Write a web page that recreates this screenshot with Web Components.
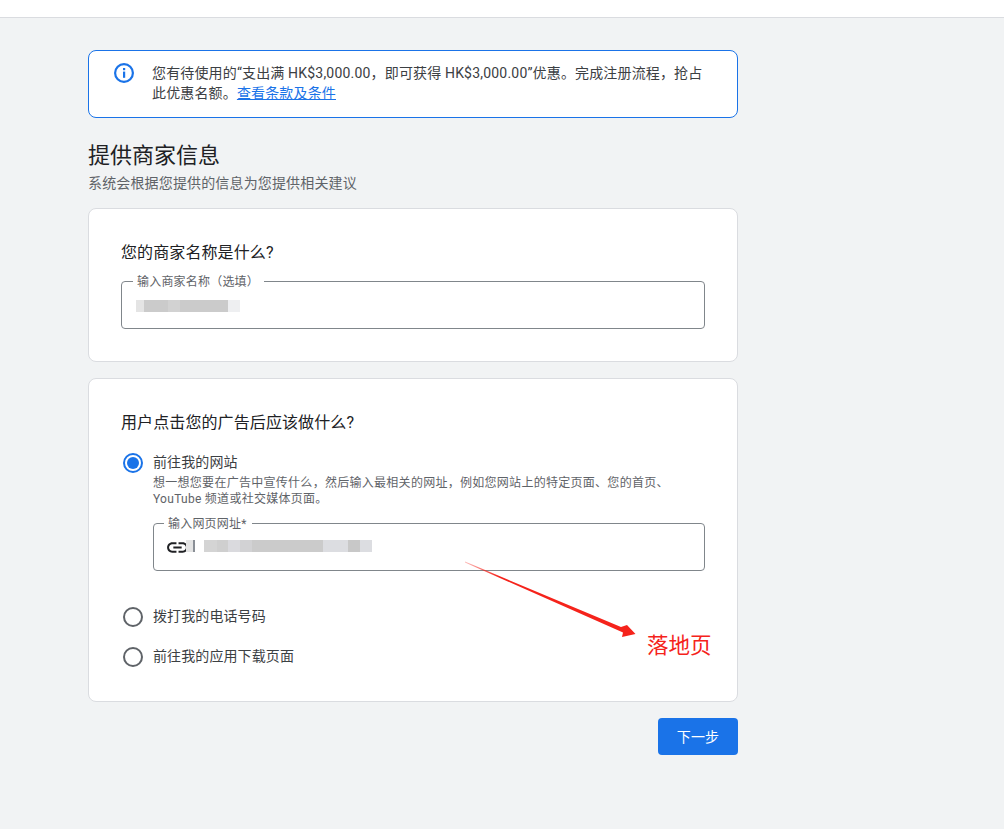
<!DOCTYPE html>
<html lang="zh-CN">
<head>
<meta charset="utf-8">
<title>提供商家信息</title>
<style>
  html, body { margin: 0; padding: 0; }
  body {
    background: #f1f3f4;
    color: #3c4043;
    font-family: Roboto, "Noto Sans CJK SC", sans-serif;
    width: 1004px;
    height: 829px;
    overflow: hidden;
    position: relative;
    text-spacing-trim: space-all;
  }
</style>
</head>
<body>
<top-bar></top-bar>
<page-main>
  <info-notice>
    <div>您有待使用的“支出满 <span style="letter-spacing:.2px">HK$3,000.00</span>，即可获得 <span style="letter-spacing:.2px">HK$3,000.00</span>”优惠。完成注册流程，抢占</div>
    <div>此优惠名额。<a href="#" style="color:#1a73e8">查看条款及条件</a></div>
  </info-notice>
  <page-title sub="系统会根据您提供的信息为您提供相关建议">提供商家信息</page-title>
  <form-card heading="您的商家名称是什么?" style="height:154px">
    <outline-field label="输入商家名称（选填）" style="--lm:-3px;--pr:5px">
      <blur-strip style="margin-top:2px" widths="8:#e4e4e4,24:#cbcbcb,12:#d2d2d2,48:#cbcbcb,12:#eeeff1"></blur-strip>
    </outline-field>
  </form-card>
  <form-card heading="用户点击您的广告后应该做什么?" style="height:324px">
    <radio-option checked label="前往我的网站" style="padding-top:1px">
      想一想您要在广告中宣传什么，然后输入最相关的网址，例如您网站上的特定页面、您的首页、<br>YouTube 频道或社交媒体页面。
      <outline-field slot="extra" label="输入网页网址*" icon style="--lm:-4px;--pr:5px">
        <blur-strip style="margin-top:-2px" widths="7:#e4e4e4,2:#8a8f96,9:#fff,13:#d4d4d4,11:#cfcfcf,12:#dadade,12:#d2d2d4,71:#cbcbcb,25:#dcdde1,12:#c8c8c8,12:#dcdde1"></blur-strip>
      </outline-field>
    </radio-option>
    <radio-option label="拨打我的电话号码" style="margin-top:35px"></radio-option>
    <radio-option label="前往我的应用下载页面" style="margin-top:18px"></radio-option>
  </form-card>
  <page-actions><blue-button>下一步</blue-button></page-actions>
</page-main>
<arrow-note>落地页</arrow-note>

<script>
function make(name, css, html, setup) {
  customElements.define(name, class extends HTMLElement {
    constructor() {
      super();
      const root = this.attachShadow({mode: 'open'});
      root.innerHTML = `<style>${css}</style>${typeof html === 'function' ? html(this) : html}`;
      if (setup) setup(this, root);
    }
  });
}

make('top-bar', `
  :host { display: block; height: 17px; background: #fff; border-bottom: 1px solid #dadce0; }
`, '');

make('page-main', `
  :host { display: block; width: 650px; padding: 32px 0 0 88px; }
`, '<slot></slot>');

make('info-notice', `
  :host { display: flex; box-sizing: border-box; height: 68px; background: #fff; border: 1px solid #1a73e8; border-radius: 8px; padding: 12px 32px 0 24px; font-size: 14px; line-height: 20px; letter-spacing: .15px; color: #3c4043; }
  svg { flex: none; width: 22px; height: 22px; margin: -1px 17px 0 0; }
  ::slotted(div) { white-space: nowrap; }
`, `
  <svg viewBox="0 0 22 22"><circle cx="11" cy="11" r="8.9" fill="none" stroke="#1a73e8" stroke-width="2.2"/><rect x="10" y="9.6" width="2.2" height="6.2" fill="#1a73e8"/><rect x="10" y="6" width="2.2" height="2.2" fill="#1a73e8"/></svg>
  <div><slot></slot></div>
`);

make('page-title', `
  :host { display: block; height: 90px; box-sizing: border-box; padding-top: 23px; }
  h1 { margin: 0; font-size: 22px; line-height: 30px; font-weight: 400; color: #202124; }
  p { margin: 3px 0 0; font-size: 14px; line-height: 18px; letter-spacing: .15px; color: #5f6368; }
`, el => `<h1><slot></slot></h1><p>${el.getAttribute('sub')}</p>`);

make('form-card', `
  :host { display: block; box-sizing: border-box; background: #fff; border: 1px solid #dadce0; border-radius: 8px; padding: 32px 32px 0; margin-bottom: 16px; }
  h2 { margin: 0 0 16px; font-size: 16px; line-height: 24px; font-weight: 400; letter-spacing: .1px; color: #202124; }
`, el => `<h2>${el.getAttribute('heading')}</h2><slot></slot>`);

make('outline-field', `
  :host { display: block; letter-spacing: 0; }
  fieldset { margin: 0; height: 48px; box-sizing: border-box; padding: 0 0 0 14px; border: 1px solid #80868b; border-radius: 4px; }
  legend { margin-left: var(--lm, -3px); padding: 0 var(--pr, 6px) 0 4px; font-size: 12px; line-height: 0; letter-spacing: .2px; color: #5f6368; height: 0; }
  .row { display: flex; align-items: center; height: 46px; }
  svg { flex: none; width: 25px; height: 25px; margin: 0 -4px 0 -3px; }
`, el => `
  <fieldset><legend>${el.getAttribute('label')}</legend>
    <div class="row">${el.hasAttribute('icon') ? '<svg viewBox="0 0 24 24"><path fill="#202124" d="M3.9 12c0-1.71 1.39-3.1 3.1-3.1h4V7H7c-2.76 0-5 2.24-5 5s2.24 5 5 5h4v-1.9H7c-1.71 0-3.1-1.39-3.1-3.1zM8 13h8v-2H8v2zm9-6h-4v1.9h4c1.71 0 3.1 1.39 3.1 3.1s-1.39 3.1-3.1 3.1h-4V17h4c2.76 0 5-2.24 5-5s-2.24-5-5-5z"/></svg>' : ''}<slot></slot></div>
  </fieldset>`);

make('blur-strip', `
  :host { display: flex; height: 12px; position: relative; }
  i { display: block; height: 12px; }
`, el => el.getAttribute('widths').split(',').map(p => {
  const [w, c] = p.split(':');
  return `<i style="width:${w}px;background:${c}"></i>`;
}).join(''));

make('radio-option', `
  :host { display: grid; grid-template-columns: 22px 1fr; column-gap: 10px; }
  .dot { width: 20px; height: 20px; margin: 1px 0 0 2px; box-sizing: border-box; border: 2px solid #5f6368; border-radius: 50%; position: relative; }
  :host([checked]) .dot { border-color: #1a73e8; }
  :host([checked]) .dot::after { content: ''; position: absolute; inset: 2px; border-radius: 50%; background: #1a73e8; }
  .label { font-size: 14px; line-height: 20px; margin-bottom: 2px; letter-spacing: .1px; color: #3c4043; }
  :host([checked]) .label { margin-bottom: 3px; }
  .help { font-size: 12px; line-height: 16px; letter-spacing: .28px; color: #5f6368; }
  .extra { grid-column: 2; margin-top: 16px; }
`, el => `
  <div class="dot"></div>
  <div><div class="label">${el.getAttribute('label')}</div><div class="help"><slot></slot></div></div>
  <div class="extra"><slot name="extra"></slot></div>`, (el, root) => {
    if (!el.hasAttribute('checked')) root.querySelector('.extra').remove();
});

make('page-actions', `
  :host { display: flex; justify-content: flex-end; }
`, '<slot></slot>');

make('blue-button', `
  :host { display: block; width: 80px; height: 37px; border-radius: 4px; background: #1a73e8; color: #fff; font-size: 14px; line-height: 38px; letter-spacing: .2px; text-align: center; }
`, '<slot></slot>');

// red annotation drawn over the card: a free overlay
make('arrow-note', `
  :host { position: absolute; left: 460px; top: 555px; width: 260px; height: 110px; display: block; }
  svg { position: absolute; left: 0; top: 0; }
  span { position: absolute; left: 187px; top: 77px; font-size: 21.5px; line-height: 28px; color: #f5231b; white-space: nowrap; }
`, `
  <svg width="260" height="110" viewBox="0 0 260 110">
    <defs><linearGradient id="g" gradientUnits="userSpaceOnUse" x1="5" y1="7" x2="40" y2="21"><stop offset="0" stop-color="#f5231b" stop-opacity=".3"/><stop offset="1" stop-color="#f5231b"/></linearGradient></defs>
    <path fill="url(#g)" d="M5 6.6 L161 72 L167 70 L175.5 79 L162 82 L163 77.5 L5 7.6 Z"/>
  </svg>
  <span><slot></slot></span>
`);
</script>
</body>
</html>
